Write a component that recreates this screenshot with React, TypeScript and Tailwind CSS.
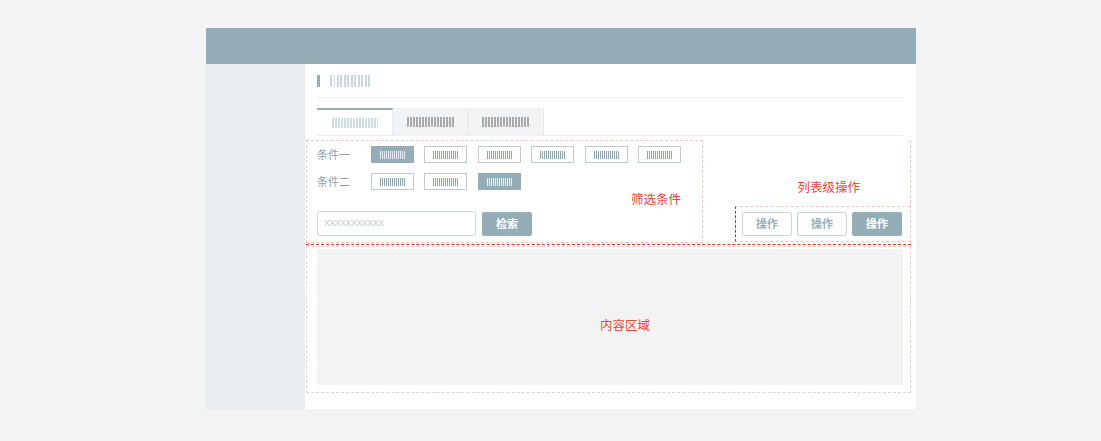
import React from "react";

const CJK = { fontFamily: '"Noto Sans CJK SC", "Noto Sans", sans-serif' };

function Bars({ w, h, color, bar = 2, period = 3.5 }: { w: number; h: number; color: string; bar?: number; period?: number }) {
  return (
    <div
      className="shrink-0"
      style={{
        width: w,
        height: h,
        backgroundImage: `repeating-linear-gradient(90deg, ${color} 0 ${bar}px, transparent ${bar}px ${period}px)`,
      }}
    />
  );
}

function FilterBtn({ active }: { active?: boolean }) {
  return (
    <div
      className={
        active
          ? "w-[43px] h-[17px] bg-[#95adb7] flex items-center justify-center shrink-0"
          : "w-[43px] h-[17px] border border-[#bfcdd3] bg-white flex items-center justify-center shrink-0"
      }
    >
      <Bars w={25} h={8} color={active ? "#e9eff2" : "#8ea5af"} bar={1} period={2} />
    </div>
  );
}

export default function App() {
  return (
    <div className="w-[1101px] h-[441px] bg-[#f3f3f3] pt-[28px] pl-[206px]" style={CJK}>
      <div className="w-[710px] h-[381px] flex flex-col">
        <div className="h-[36px] bg-[#95adb7] shrink-0" />
        <div className="flex flex-1">
          <div className="w-[99px] bg-[#e9edf2] shrink-0" />
          <div className="flex-1 bg-white flex flex-col">
            {/* title */}
            <div className="ml-[12px] mr-[13px] h-[34px] border-b border-[#eeeeee] flex items-center gap-[10px] pt-[1px]">
              <div className="w-[3px] h-[12px] bg-[#95adb7]" />
              <Bars w={42} h={12} color="#c9d8df" bar={2} period={3.5} />
            </div>
            {/* tabs */}
            <div className="ml-[12px] mr-[13px] mt-[10px] flex border-b border-[#eeeeee] h-[28px]">
              <div className="w-[76px] bg-white border-t-2 border-[#95adb7] border-r border-r-[#ececec] flex items-center justify-center">
                <Bars w={46} h={10} color="#cfdde3" bar={2} period={3} />
              </div>
              <div className="w-[75px] bg-[#f3f4f5] border-t border-[#eeeeee] border-r border-r-[#e8e8e8] flex items-center justify-center">
                <Bars w={47} h={10} color="#a9a9a9" bar={2} period={3} />
              </div>
              <div className="w-[76px] bg-[#f3f4f5] border-t border-[#eeeeee] border-r border-r-[#e8e8e8] flex items-center justify-center">
                <Bars w={47} h={10} color="#a9a9a9" bar={2} period={3} />
              </div>
            </div>
            {/* filter + list ops */}
            <div className="mt-[4px] ml-[1px] mr-[5px] flex h-[103px]">
              <div className="relative w-[397px] h-[103px] border border-dashed border-[#f9c8c8] pl-[10px] pt-[5px] flex flex-col">
                <div className="flex items-center h-[17px]">
                  <div className="w-[54px] text-[11px] text-[#8fa3ad] leading-none">条件一</div>
                  <div className="flex gap-[10.4px]">
                    <FilterBtn active />
                    <FilterBtn />
                    <FilterBtn />
                    <FilterBtn />
                    <FilterBtn />
                    <FilterBtn />
                  </div>
                </div>
                <div className="flex items-center h-[17px] mt-[10px]">
                  <div className="w-[54px] text-[11px] text-[#8fa3ad] leading-none">条件二</div>
                  <div className="flex gap-[10.4px]">
                    <FilterBtn />
                    <FilterBtn />
                    <FilterBtn active />
                  </div>
                </div>
                <div className="flex items-center mt-[21px] gap-[6px]">
                  <div className="w-[159px] h-[25px] border border-[#d3dde2] rounded-[2px] flex items-center pl-[6px]">
                    <span className="text-[9px] tracking-[-0.6px] text-[#bfccd2]" style={{ fontFamily: '"Liberation Sans", sans-serif' }}>
                      XXXXXXXXXXX
                    </span>
                  </div>
                  <div className="w-[50px] h-[24px] bg-[#95adb7] rounded-[2px] flex items-center justify-center text-[11px] font-bold text-white">
                    检索
                  </div>
                </div>
                <div className="absolute right-[21px] top-[52px] text-[12.5px] text-[#f0473a] leading-none">筛选条件</div>
              </div>
              <div className="flex-1 border-r border-dashed border-[#f9c8c8] flex flex-col items-end">
                <div className="mt-[41px] mr-[50px] text-[12.5px] text-[#f0473a] leading-none">列表级操作</div>
                <div className="mt-[12px] w-[175px] h-[36px] border-t border-b border-l border-dashed border-t-[#f9c8c8] border-b-[#f9c8c8] border-l-[#555555] flex items-start pt-[5px] pl-[6px] gap-[5px]">
                  <div className="w-[50px] h-[24px] border border-[#c9d6dc] rounded-[2px] bg-white flex items-center justify-center text-[11px] font-bold text-[#9db1ba]">
                    操作
                  </div>
                  <div className="w-[50px] h-[24px] border border-[#c9d6dc] rounded-[2px] bg-white flex items-center justify-center text-[11px] font-bold text-[#9db1ba]">
                    操作
                  </div>
                  <div className="w-[50px] h-[24px] bg-[#95adb7] rounded-[2px] flex items-center justify-center text-[11px] font-bold text-white">
                    操作
                  </div>
                </div>
              </div>
            </div>
            {/* red dashed divider */}
            <div className="ml-[1px] mr-[5px] mt-[1px] border-t border-dashed border-[#e5392b]" />
            {/* content */}
            <div className="ml-[1px] mr-[5px] mt-[1px] h-[147px] border border-dashed border-[#f4cccc] pt-[2px] pl-[10px] pr-[7px] pb-[7px]">
              <div className="w-full h-full bg-[#f3f3f3] flex items-center justify-center pl-[30px] pt-[16px]">
                <span className="text-[12.5px] text-[#f0473a] leading-none">内容区域</span>
              </div>
            </div>
          </div>
        </div>
      </div>
    </div>
  );
}
